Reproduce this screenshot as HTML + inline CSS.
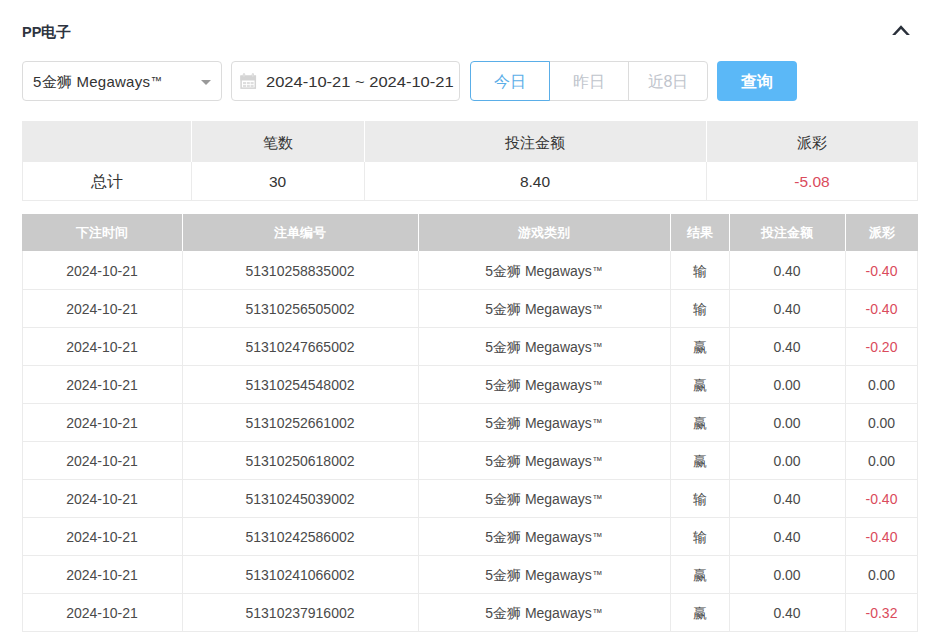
<!DOCTYPE html>
<html><head><meta charset="utf-8">
<style>
*{box-sizing:border-box;margin:0;padding:0}
html,body{width:932px;height:632px;overflow:hidden;background:#fff}
body{font-family:"Liberation Sans",sans-serif;color:#333;position:relative}
.abs{position:absolute}
.title{left:22px;top:23px;font-size:14.5px;font-weight:bold;color:#2e3440;line-height:18px;white-space:nowrap}
.chev{left:890px;top:22px;width:22px;height:16px}
.box{border:1px solid #dcdcdc;border-radius:4px;height:40px;top:61px}
.sel{left:22px;width:200px}
.sel .txt{left:10px;letter-spacing:0.25px;top:1px;line-height:38px;font-size:15px;color:#333;white-space:nowrap}
.caret{left:178px;top:18px;width:0;height:0;border-left:5px solid transparent;border-right:5px solid transparent;border-top:5px solid #999}
.date{left:231px;width:229px}
.date .txt{left:34px;top:1px;transform:scaleX(1.1);transform-origin:0 0;line-height:38px;font-size:15px;letter-spacing:0px;color:#333;white-space:nowrap}
.cal{left:8px;top:11px;width:17px;height:17px}
.grp{left:470px;top:61px;width:238px;height:40px}
.gb{top:0;height:40px;border:1px solid #dcdcdc;font-size:16px;color:#c0c4cc;text-align:center;line-height:40px;white-space:nowrap}
.q{left:717px;top:61px;width:80px;height:40px;background:#5bb8f7;border-radius:4px;color:#fff;font-size:16px;font-weight:bold;text-align:center;line-height:41px}
.vw{width:1px;background:#fff}
.vg{width:1px;background:#ebebeb}
.hg{left:22px;width:896px;height:1px;background:#ebebeb}
.sc{text-align:center;font-size:15px;color:#333;white-space:nowrap}
.dh{height:37px;line-height:38px;text-align:center;color:#fff;font-weight:bold;font-size:13px;white-space:nowrap}
.dc{height:38px;line-height:38px;text-align:center;font-size:14px;color:#4a4a4a;white-space:nowrap}
.tm{font-size:0.75em;position:relative;top:-2px;margin-left:0.5px}
.red{color:#da4b5c !important}
</style></head><body>
<div class="abs title">PP电子</div>
<svg class="abs chev" viewBox="0 0 22 16"><polygon points="2.1,13 11,3.3 19.9,13 16.7,13 11,6.9 5.3,13" fill="#2a303a"/></svg>
<div class="abs box sel"><div class="abs txt">5金狮 Megaways<span class="tm">™</span></div><div class="abs caret"></div></div>
<div class="abs box date">
<svg class="abs cal" viewBox="0 0 17 17"><rect x="1.1" y="3.25" width="14.2" height="11.9" fill="none" stroke="#d4d4d4" stroke-width="1.5"/><rect x="0.35" y="2.5" width="15.7" height="5" fill="#d4d4d4"/><rect x="2.9" y="0.3" width="2.2" height="4" rx="1" fill="#d4d4d4"/><rect x="11.8" y="0.3" width="2.2" height="4" rx="1" fill="#d4d4d4"/><rect x="3.6" y="1" width="0.8" height="2.6" fill="#eee"/><rect x="12.5" y="1" width="0.8" height="2.6" fill="#eee"/><g fill="#dedede"><rect x="3" y="9" width="3" height="2.2"/><rect x="6.8" y="9" width="3" height="2.2"/><rect x="10.6" y="9" width="3" height="2.2"/><rect x="3" y="12" width="3" height="2.2"/><rect x="6.8" y="12" width="3" height="2.2"/><rect x="10.6" y="12" width="3" height="2.2"/></g></svg>
<div class="abs txt">2024-10-21 ~ 2024-10-21</div></div>
<div class="abs grp">
<div class="abs gb" style="left:0;width:80px;border-color:#5aaee8;color:#5aaee8;border-radius:4px 0 0 4px;z-index:2">今日</div>
<div class="abs gb" style="left:79px;width:80px;border-left:none">昨日</div>
<div class="abs gb" style="left:158px;width:80px;border-radius:0 4px 4px 0">近8日</div>
</div>
<div class="abs q">查询</div>
<div class="abs" style="left:22px;top:121px;width:896px;height:41px;background:#ebebeb"></div>
<div class="abs vw" style="left:191px;top:121px;height:41px"></div>
<div class="abs vw" style="left:364px;top:121px;height:41px"></div>
<div class="abs vw" style="left:706px;top:121px;height:41px"></div>
<div class="abs" style="left:22px;top:162px;width:896px;height:39px;border:1px solid #ebebeb;border-top:none"></div>
<div class="abs vg" style="left:191px;top:162px;height:38px"></div>
<div class="abs vg" style="left:364px;top:162px;height:38px"></div>
<div class="abs vg" style="left:706px;top:162px;height:38px"></div>
<div class="abs sc" style="left:22px;top:162px;width:169px;height:39px;line-height:39px;font-size:15.5px">总计</div>
<div class="abs sc" style="left:191px;top:123px;width:173px;height:40px;line-height:40px">笔数</div>
<div class="abs sc" style="left:191px;top:162px;width:173px;height:39px;line-height:39px;font-size:15.5px">30</div>
<div class="abs sc" style="left:364px;top:123px;width:342px;height:40px;line-height:40px">投注金额</div>
<div class="abs sc" style="left:364px;top:162px;width:342px;height:39px;line-height:39px;font-size:15.5px">8.40</div>
<div class="abs sc" style="left:706px;top:123px;width:212px;height:40px;line-height:40px">派彩</div>
<div class="abs sc red" style="left:706px;top:162px;width:212px;height:39px;line-height:39px;font-size:15.5px">-5.08</div>
<div class="abs" style="left:22px;top:214px;width:896px;height:37px;background:#cacaca"></div>
<div class="abs vw" style="left:182px;top:214px;height:37px"></div>
<div class="abs vw" style="left:418px;top:214px;height:37px"></div>
<div class="abs vw" style="left:670px;top:214px;height:37px"></div>
<div class="abs vw" style="left:729px;top:214px;height:37px"></div>
<div class="abs vw" style="left:845px;top:214px;height:37px"></div>
<div class="abs dh" style="left:22px;top:214px;width:160px">下注时间</div>
<div class="abs dh" style="left:182px;top:214px;width:236px">注单编号</div>
<div class="abs dh" style="left:418px;top:214px;width:252px">游戏类别</div>
<div class="abs dh" style="left:670px;top:214px;width:59px">结果</div>
<div class="abs dh" style="left:729px;top:214px;width:116px">投注金额</div>
<div class="abs dh" style="left:845px;top:214px;width:73px">派彩</div>
<div class="abs" style="left:22px;top:251px;width:896px;height:381px;border:1px solid #ebebeb;border-top:none"></div>
<div class="abs vg" style="left:182px;top:251px;height:380px"></div>
<div class="abs vg" style="left:418px;top:251px;height:380px"></div>
<div class="abs vg" style="left:670px;top:251px;height:380px"></div>
<div class="abs vg" style="left:729px;top:251px;height:380px"></div>
<div class="abs vg" style="left:845px;top:251px;height:380px"></div>
<div class="abs hg" style="top:289px"></div>
<div class="abs dc" style="left:22px;top:252px;width:160px">2024-10-21</div>
<div class="abs dc" style="left:182px;top:252px;width:236px">51310258835002</div>
<div class="abs dc" style="left:418px;top:252px;width:252px">5金狮 Megaways<span class="tm">™</span></div>
<div class="abs dc" style="left:670px;top:252px;width:59px">输</div>
<div class="abs dc" style="left:729px;top:252px;width:116px">0.40</div>
<div class="abs dc red" style="left:845px;top:252px;width:73px">-0.40</div>
<div class="abs hg" style="top:327px"></div>
<div class="abs dc" style="left:22px;top:290px;width:160px">2024-10-21</div>
<div class="abs dc" style="left:182px;top:290px;width:236px">51310256505002</div>
<div class="abs dc" style="left:418px;top:290px;width:252px">5金狮 Megaways<span class="tm">™</span></div>
<div class="abs dc" style="left:670px;top:290px;width:59px">输</div>
<div class="abs dc" style="left:729px;top:290px;width:116px">0.40</div>
<div class="abs dc red" style="left:845px;top:290px;width:73px">-0.40</div>
<div class="abs hg" style="top:365px"></div>
<div class="abs dc" style="left:22px;top:328px;width:160px">2024-10-21</div>
<div class="abs dc" style="left:182px;top:328px;width:236px">51310247665002</div>
<div class="abs dc" style="left:418px;top:328px;width:252px">5金狮 Megaways<span class="tm">™</span></div>
<div class="abs dc" style="left:670px;top:328px;width:59px">赢</div>
<div class="abs dc" style="left:729px;top:328px;width:116px">0.40</div>
<div class="abs dc red" style="left:845px;top:328px;width:73px">-0.20</div>
<div class="abs hg" style="top:403px"></div>
<div class="abs dc" style="left:22px;top:366px;width:160px">2024-10-21</div>
<div class="abs dc" style="left:182px;top:366px;width:236px">51310254548002</div>
<div class="abs dc" style="left:418px;top:366px;width:252px">5金狮 Megaways<span class="tm">™</span></div>
<div class="abs dc" style="left:670px;top:366px;width:59px">赢</div>
<div class="abs dc" style="left:729px;top:366px;width:116px">0.00</div>
<div class="abs dc" style="left:845px;top:366px;width:73px">0.00</div>
<div class="abs hg" style="top:441px"></div>
<div class="abs dc" style="left:22px;top:404px;width:160px">2024-10-21</div>
<div class="abs dc" style="left:182px;top:404px;width:236px">51310252661002</div>
<div class="abs dc" style="left:418px;top:404px;width:252px">5金狮 Megaways<span class="tm">™</span></div>
<div class="abs dc" style="left:670px;top:404px;width:59px">赢</div>
<div class="abs dc" style="left:729px;top:404px;width:116px">0.00</div>
<div class="abs dc" style="left:845px;top:404px;width:73px">0.00</div>
<div class="abs hg" style="top:479px"></div>
<div class="abs dc" style="left:22px;top:442px;width:160px">2024-10-21</div>
<div class="abs dc" style="left:182px;top:442px;width:236px">51310250618002</div>
<div class="abs dc" style="left:418px;top:442px;width:252px">5金狮 Megaways<span class="tm">™</span></div>
<div class="abs dc" style="left:670px;top:442px;width:59px">赢</div>
<div class="abs dc" style="left:729px;top:442px;width:116px">0.00</div>
<div class="abs dc" style="left:845px;top:442px;width:73px">0.00</div>
<div class="abs hg" style="top:517px"></div>
<div class="abs dc" style="left:22px;top:480px;width:160px">2024-10-21</div>
<div class="abs dc" style="left:182px;top:480px;width:236px">51310245039002</div>
<div class="abs dc" style="left:418px;top:480px;width:252px">5金狮 Megaways<span class="tm">™</span></div>
<div class="abs dc" style="left:670px;top:480px;width:59px">输</div>
<div class="abs dc" style="left:729px;top:480px;width:116px">0.40</div>
<div class="abs dc red" style="left:845px;top:480px;width:73px">-0.40</div>
<div class="abs hg" style="top:555px"></div>
<div class="abs dc" style="left:22px;top:518px;width:160px">2024-10-21</div>
<div class="abs dc" style="left:182px;top:518px;width:236px">51310242586002</div>
<div class="abs dc" style="left:418px;top:518px;width:252px">5金狮 Megaways<span class="tm">™</span></div>
<div class="abs dc" style="left:670px;top:518px;width:59px">输</div>
<div class="abs dc" style="left:729px;top:518px;width:116px">0.40</div>
<div class="abs dc red" style="left:845px;top:518px;width:73px">-0.40</div>
<div class="abs hg" style="top:593px"></div>
<div class="abs dc" style="left:22px;top:556px;width:160px">2024-10-21</div>
<div class="abs dc" style="left:182px;top:556px;width:236px">51310241066002</div>
<div class="abs dc" style="left:418px;top:556px;width:252px">5金狮 Megaways<span class="tm">™</span></div>
<div class="abs dc" style="left:670px;top:556px;width:59px">赢</div>
<div class="abs dc" style="left:729px;top:556px;width:116px">0.00</div>
<div class="abs dc" style="left:845px;top:556px;width:73px">0.00</div>
<div class="abs hg" style="top:631px"></div>
<div class="abs dc" style="left:22px;top:594px;width:160px">2024-10-21</div>
<div class="abs dc" style="left:182px;top:594px;width:236px">51310237916002</div>
<div class="abs dc" style="left:418px;top:594px;width:252px">5金狮 Megaways<span class="tm">™</span></div>
<div class="abs dc" style="left:670px;top:594px;width:59px">赢</div>
<div class="abs dc" style="left:729px;top:594px;width:116px">0.40</div>
<div class="abs dc red" style="left:845px;top:594px;width:73px">-0.32</div>
</body></html>
